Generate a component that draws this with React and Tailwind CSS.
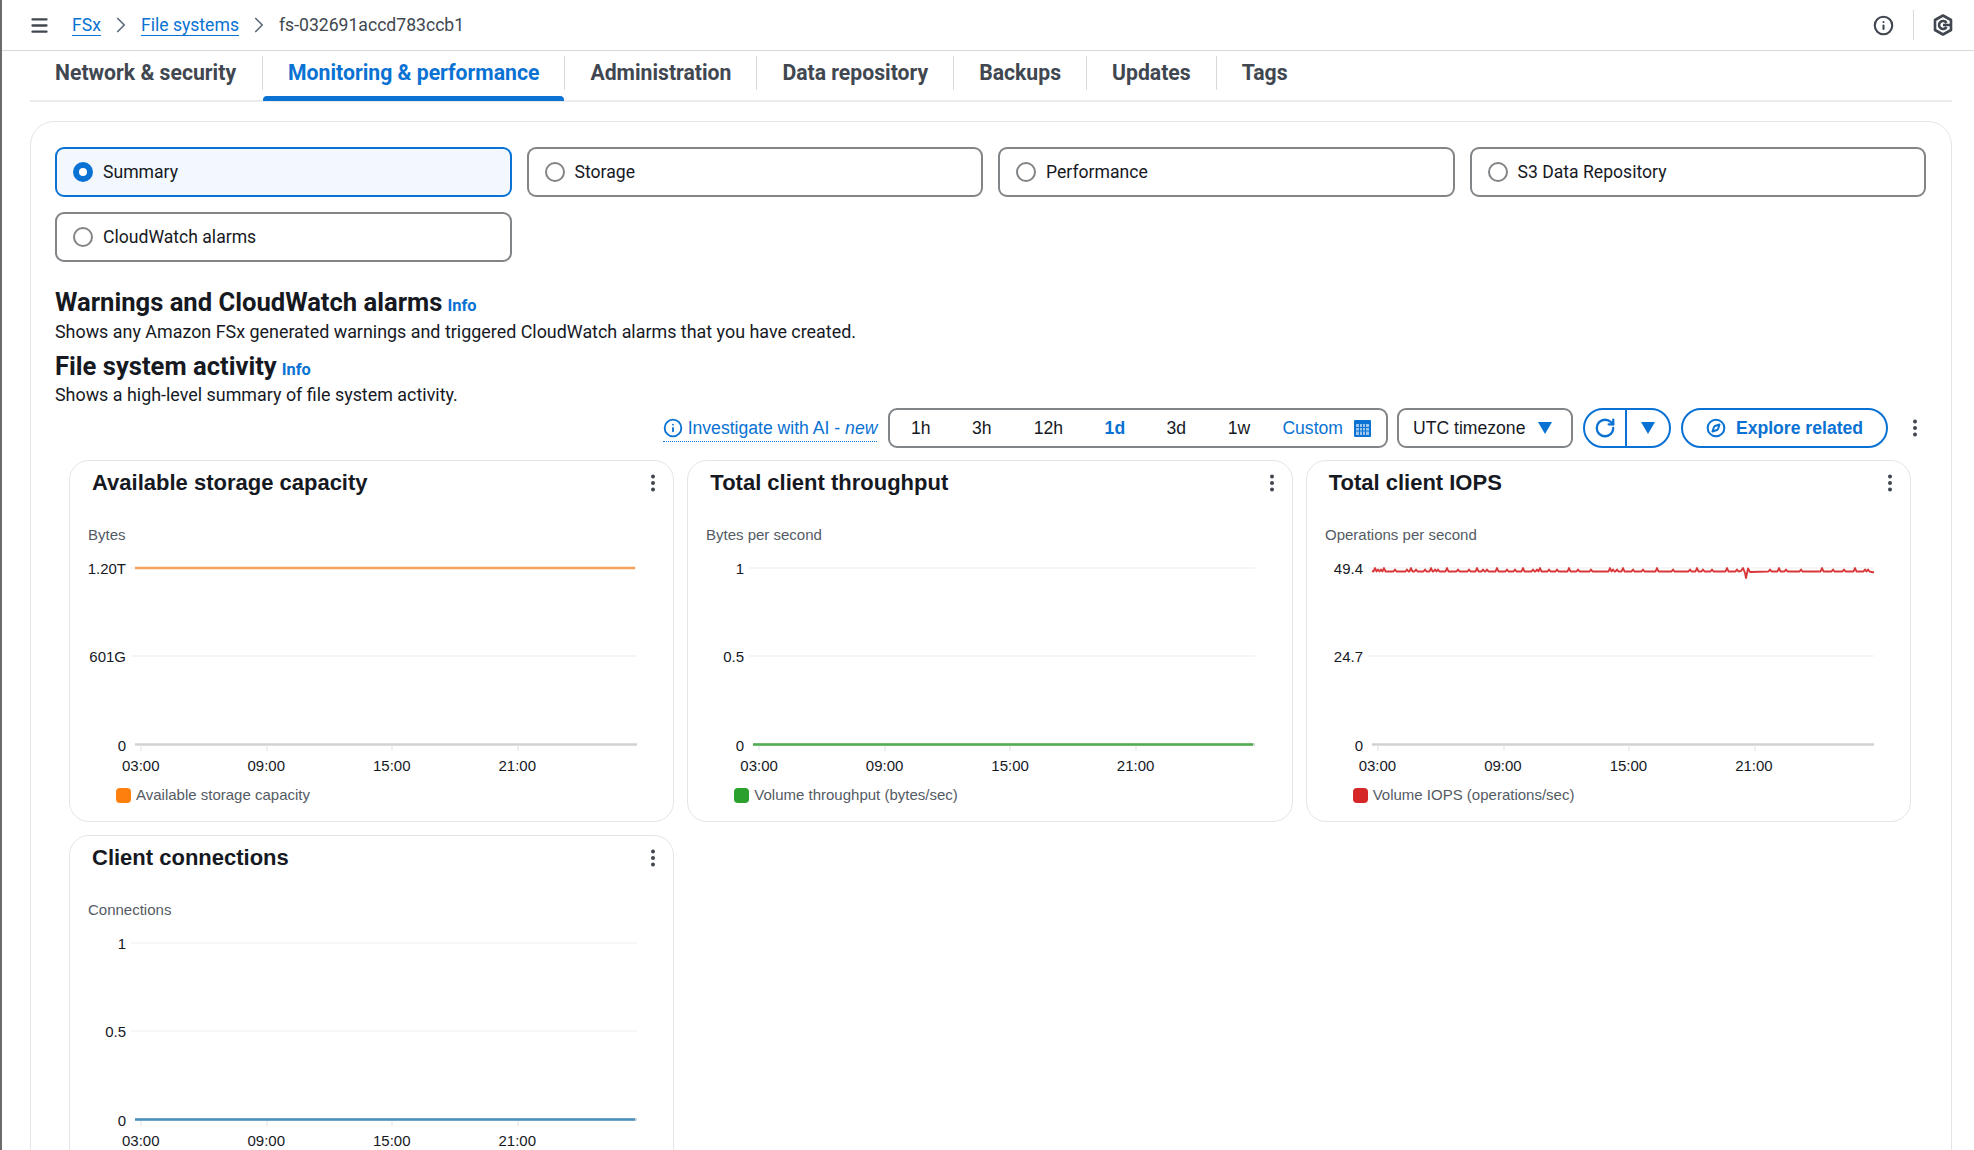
import React from 'react';
import { Menu, ChevronRight, Info, RotateCw, Compass } from 'lucide-react';

const TABS = [
  { label: 'Network & security', cls: 'pl-[25px] pr-[26px]' },
  { label: 'Monitoring & performance', active: true, cls: 'px-[25px]' },
  { label: 'Administration', cls: 'px-[25px]' },
  { label: 'Data repository', cls: 'px-[25px]' },
  { label: 'Backups', cls: 'px-[25px]' },
  { label: 'Updates', cls: 'px-[25px]' },
  { label: 'Tags', cls: 'px-[25px]', last: true },
];

const RANGES = [
  { label: '1h', cls: 'w-[61px]' },
  { label: '3h', cls: 'w-[61px]' },
  { label: '12h', cls: 'w-[72px]' },
  { label: '1d', cls: 'w-[61px]', active: true },
  { label: '3d', cls: 'w-[62px]' },
  { label: '1w', cls: 'w-[63px]' },
];

const TICKS = [71, 197, 322, 448];

// bumps read off the IOPS trace, px from the left of the card
const IOPS_SPIKES = [
  68, 71, 74, 77, 88, 100, 104, 109, 118, 124, 128, 131, 140, 151, 162, 170, 176, 180, 190, 200, 208,
  216, 226, 230, 233, 242, 250, 262, 271, 284, 303, 306, 310, 316, 326, 336, 350, 366, 383, 390, 396,
  405, 420, 430, 463, 472, 479, 494, 515, 526, 537, 548, 558, 561,
];

const iopsPath = () => {
  const pts = [[65, 48]];
  IOPS_SPIKES.forEach((s, i) => {
    const top = i % 3 === 0 ? 45 : 46.5;
    pts.push([s - 1.5, 48.5], [s, top], [s + 1.5, 48.5]);
  });
  pts.push([434, 48], [436, 45], [438, 50], [439, 55], [441, 45.5], [443, 49], [567, 49.5]);
  pts.sort((a, b) => a[0] - b[0]);
  return 'M' + pts.map((p) => p.join(',')).join(' L');
};

const CHARTS = [
  {
    title: 'Available storage capacity',
    unit: 'Bytes',
    yLabels: ['1.20T', '601G', '0'],
    legend: 'Available storage capacity',
    swatch: 'bg-[#ff7f0e]',
    line: <line x1="65" x2="565" y1="45" y2="45" stroke="#f9a15a" strokeWidth="2.5" />,
  },
  {
    title: 'Total client throughput',
    unit: 'Bytes per second',
    yLabels: ['1', '0.5', '0'],
    legend: 'Volume throughput (bytes/sec)',
    swatch: 'bg-[#2ca02c]',
    line: <line x1="65" x2="565" y1="221.5" y2="221.5" stroke="#4fae4f" strokeWidth="2.5" />,
  },
  {
    title: 'Total client IOPS',
    unit: 'Operations per second',
    yLabels: ['49.4', '24.7', '0'],
    legend: 'Volume IOPS (operations/sec)',
    swatch: 'bg-[#d62728]',
    line: <path d={iopsPath()} fill="none" stroke="#d8383a" strokeWidth="1.9" strokeLinejoin="round" />,
  },
  {
    title: 'Client connections',
    unit: 'Connections',
    yLabels: ['1', '0.5', '0'],
    legend: 'Connections',
    swatch: 'bg-[#1f77b4]',
    line: <line x1="65" x2="565" y1="221.5" y2="221.5" stroke="#4a90bf" strokeWidth="2.5" />,
  },
];

const Radio = ({ label, active }) => (
  <div
    className={`h-[50px] flex items-center gap-[10px] pl-[16px] rounded-[9px] border-2 ${
      active ? 'border-[#0972d3] bg-[#f2f8fd]' : 'border-[#828588] bg-white'
    }`}
  >
    {active ? (
      <span className="w-[20px] h-[20px] rounded-full border-[6px] border-[#0972d3] bg-white" />
    ) : (
      <span className="w-[20px] h-[20px] rounded-full border-2 border-[#828588] bg-white" />
    )}
    <span className="text-[17.6px] text-[#16191f]">{label}</span>
  </div>
);

const Kebab = () => (
  <svg width="6" height="18" viewBox="0 0 6 18" fill="#414750">
    <circle cx="3" cy="2.5" r="2" />
    <circle cx="3" cy="9" r="2" />
    <circle cx="3" cy="15.5" r="2" />
  </svg>
);

const ChartCard = ({ title, unit, yLabels, legend, swatch, line }) => (
  <div className="h-[362px] rounded-[20px] border border-[#e3e5e8] bg-white font-['Liberation_Sans',sans-serif]">
    <div className="h-[62px] flex items-start justify-between pl-[22px] pr-[17px] pt-[6px]">
      <h3 className="text-[22px] leading-[32px] font-bold text-[#16191f]">{title}</h3>
      <div className="pt-[7px]">
        <Kebab />
      </div>
    </div>
    <svg width="604" height="232" viewBox="0 0 604 232" className="block" fontFamily="'Liberation Sans', sans-serif">
      <text x="18" y="17" fontSize="15" fill="#545b64">{unit}</text>
      <line x1="61" x2="567" y1="45" y2="45" stroke="#f2f3f3" strokeWidth="1.5" />
      <line x1="61" x2="567" y1="133" y2="133" stroke="#f2f3f3" strokeWidth="1.5" />
      <line x1="65" x2="567" y1="221.5" y2="221.5" stroke="#cfd2d4" strokeWidth="2.5" />
      {TICKS.map((x) => (
        <line key={x} x1={x} x2={x} y1="222" y2="228" stroke="#dfe1e3" />
      ))}
      {yLabels.map((t, i) => (
        <text key={t + i} x="56" y={50.5 + i * 88.5} textAnchor="end" fontSize="15" fill="#16191f">{t}</text>
      ))}
      {line}
    </svg>
    <div className="flex h-[24px] text-[15px] text-[#16191f]">
      {['03:00', '09:00', '15:00', '21:00'].map((t, i) => (
        <span key={t} className={`w-[125.5px] text-center ${i === 0 ? 'ml-[8px]' : ''}`}>{t}</span>
      ))}
    </div>
    <div className="flex items-center gap-[5px] pl-[46px] pt-[5px] text-[15px] text-[#545b64]">
      <span className={`w-[15px] h-[15px] rounded-[4px] ${swatch}`} />
      <span>{legend}</span>
    </div>
  </div>
);

const App = () => {
  return (
    <div className="h-[1150px] overflow-hidden bg-white border-l-2 border-[#6b6b6b] font-['Roboto',sans-serif] text-[#16191f]">
      <header className="h-[51px] flex items-center border-b border-[#d5dbdb] pl-[27px] pr-[21px] text-[17.6px]">
        <Menu className="w-[21px] h-[21px] text-[#414750]" strokeWidth={2.6} />
        <a className="ml-[22px] text-[#0972d3] underline underline-offset-4">FSx</a>
        <ChevronRight className="w-[26px] h-[26px] mx-[7px] text-[#5f6b7a]" strokeWidth={1.6} />
        <a className="text-[#0972d3] underline underline-offset-4">File systems</a>
        <ChevronRight className="w-[26px] h-[26px] mx-[7px] text-[#5f6b7a]" strokeWidth={1.6} />
        <span className="text-[#414750]">fs-032691accd783ccb1</span>
        <div className="ml-auto flex items-center">
          <Info className="w-[21px] h-[21px] text-[#414750]" strokeWidth={2.4} />
          <div className="w-px h-[30px] bg-[#d5dbdb] mx-[19px]" />
          <svg width="20" height="22" viewBox="0 0 20 22" fill="none" stroke="#414750" strokeWidth="2.6" strokeLinejoin="round">
            <path d="M10 1.5 L18 6 V16 L10 20.5 L2 16 V6 Z" />
            <path d="M13.5 9 A4 4 0 1 0 13.5 13 M10 11 H17" />
          </svg>
        </div>
      </header>

      <nav className="h-[51px] ml-[28px] mr-[22px] flex border-b-2 border-[#e9ebed]">
        {TABS.map((t) => (
          <div
            key={t.label}
            className={`relative mt-[5px] h-[34px] flex items-center ${t.cls} ${t.last ? '' : 'border-r border-[#d5dbdb]'}`}
          >
            <span className={`text-[21.2px] font-bold whitespace-nowrap ${t.active ? 'text-[#0972d3]' : 'text-[#414750]'}`}>
              {t.label}
            </span>
            {t.active && <div className="absolute left-0 right-0 bottom-[-11px] h-[5px] rounded-t-sm bg-[#0972d3]" />}
          </div>
        ))}
      </nav>

      <main className="mt-[19px] ml-[28px] mr-[22px] h-[1100px] rounded-[24px] border border-[#e3e5e8] pl-[24px] pr-[25px] pt-[25px]">
        <div className="grid grid-cols-4 gap-x-[15px] gap-y-[15px]">
          <Radio label="Summary" active />
          <Radio label="Storage" />
          <Radio label="Performance" />
          <Radio label="S3 Data Repository" />
          <Radio label="CloudWatch alarms" />
        </div>

        <div className="mt-[24px] flex items-baseline gap-[5px]">
          <h2 className="text-[25.6px] leading-[32px] font-bold">Warnings and CloudWatch alarms</h2>
          <a className="text-[16.4px] font-bold text-[#0972d3]">Info</a>
        </div>
        <p className="text-[17.9px] leading-[26px]">Shows any Amazon FSx generated warnings and triggered CloudWatch alarms that you have created.</p>
        <div className="mt-[5px] flex items-baseline gap-[5px]">
          <h2 className="text-[25.6px] leading-[32px] font-bold">File system activity</h2>
          <a className="text-[16.4px] font-bold text-[#0972d3]">Info</a>
        </div>
        <p className="text-[17.9px] leading-[26px]">Shows a high-level summary of file system activity.</p>

        <div className="h-[40px] flex items-center justify-end pr-[8px] font-['Liberation_Sans',sans-serif] text-[17.6px]">
          <a className="flex items-center gap-[5px] text-[#0972d3] border-b border-dotted border-[#0972d3]">
            <Info className="w-[20px] h-[20px]" strokeWidth={2.2} />
            <span>Investigate with AI - <em>new</em></span>
          </a>
          <div className="ml-[11px] h-[40px] flex items-center rounded-[9px] border-2 border-[#828588]">
            {RANGES.map((r) => (
              <span key={r.label} className={`${r.cls} text-center ${r.active ? 'font-bold text-[#0972d3]' : ''}`}>{r.label}</span>
            ))}
            <span className="text-[#0972d3] ml-[12px]">Custom</span>
            <svg width="17" height="17" viewBox="0 0 17 17" className="ml-[11px] mr-[15px]">
              <rect width="17" height="17" rx="1" fill="#0972d3" />
              <rect x="2" y="4" width="13" height="11" fill="#9cc6ee" />
              <path d="M2 7.5H15M2 11H15M5.5 4V15M8.5 4V15M11.5 4V15" stroke="#0972d3" strokeWidth="1" />
            </svg>
          </div>
          <div className="ml-[9px] h-[40px] w-[176px] flex items-center justify-between pl-[14px] pr-[19px] rounded-[9px] border-2 border-[#828588]">
            <span>UTC timezone</span>
            <svg width="14" height="12" viewBox="0 0 14 12"><path d="M0 0H14L7 12Z" fill="#0972d3" /></svg>
          </div>
          <div className="ml-[10px] h-[40px] w-[88px] flex items-center rounded-full border-2 border-[#0972d3] text-[#0972d3]">
            <div className="w-[42px] h-full flex items-center justify-center border-r-2 border-[#0972d3]">
              <RotateCw className="w-[22px] h-[22px]" strokeWidth={2.5} />
            </div>
            <div className="flex-1 flex items-center justify-center">
              <svg width="14" height="12" viewBox="0 0 14 12"><path d="M0 0H14L7 12Z" fill="#0972d3" /></svg>
            </div>
          </div>
          <div className="ml-[10px] h-[40px] w-[207px] flex items-center justify-center gap-[10px] rounded-full border-2 border-[#0972d3] text-[#0972d3] font-bold">
            <Compass className="w-[20px] h-[20px]" strokeWidth={2.4} />
            <span>Explore related</span>
          </div>
          <div className="ml-[24px]">
            <Kebab />
          </div>
        </div>

        <div className="mt-[12px] ml-[14px] mr-[15px] grid grid-cols-3 gap-x-[13px] gap-y-[13px]">
          {CHARTS.map((c) => (
            <ChartCard key={c.title} {...c} />
          ))}
        </div>
      </main>
    </div>
  );
};

export default App;
